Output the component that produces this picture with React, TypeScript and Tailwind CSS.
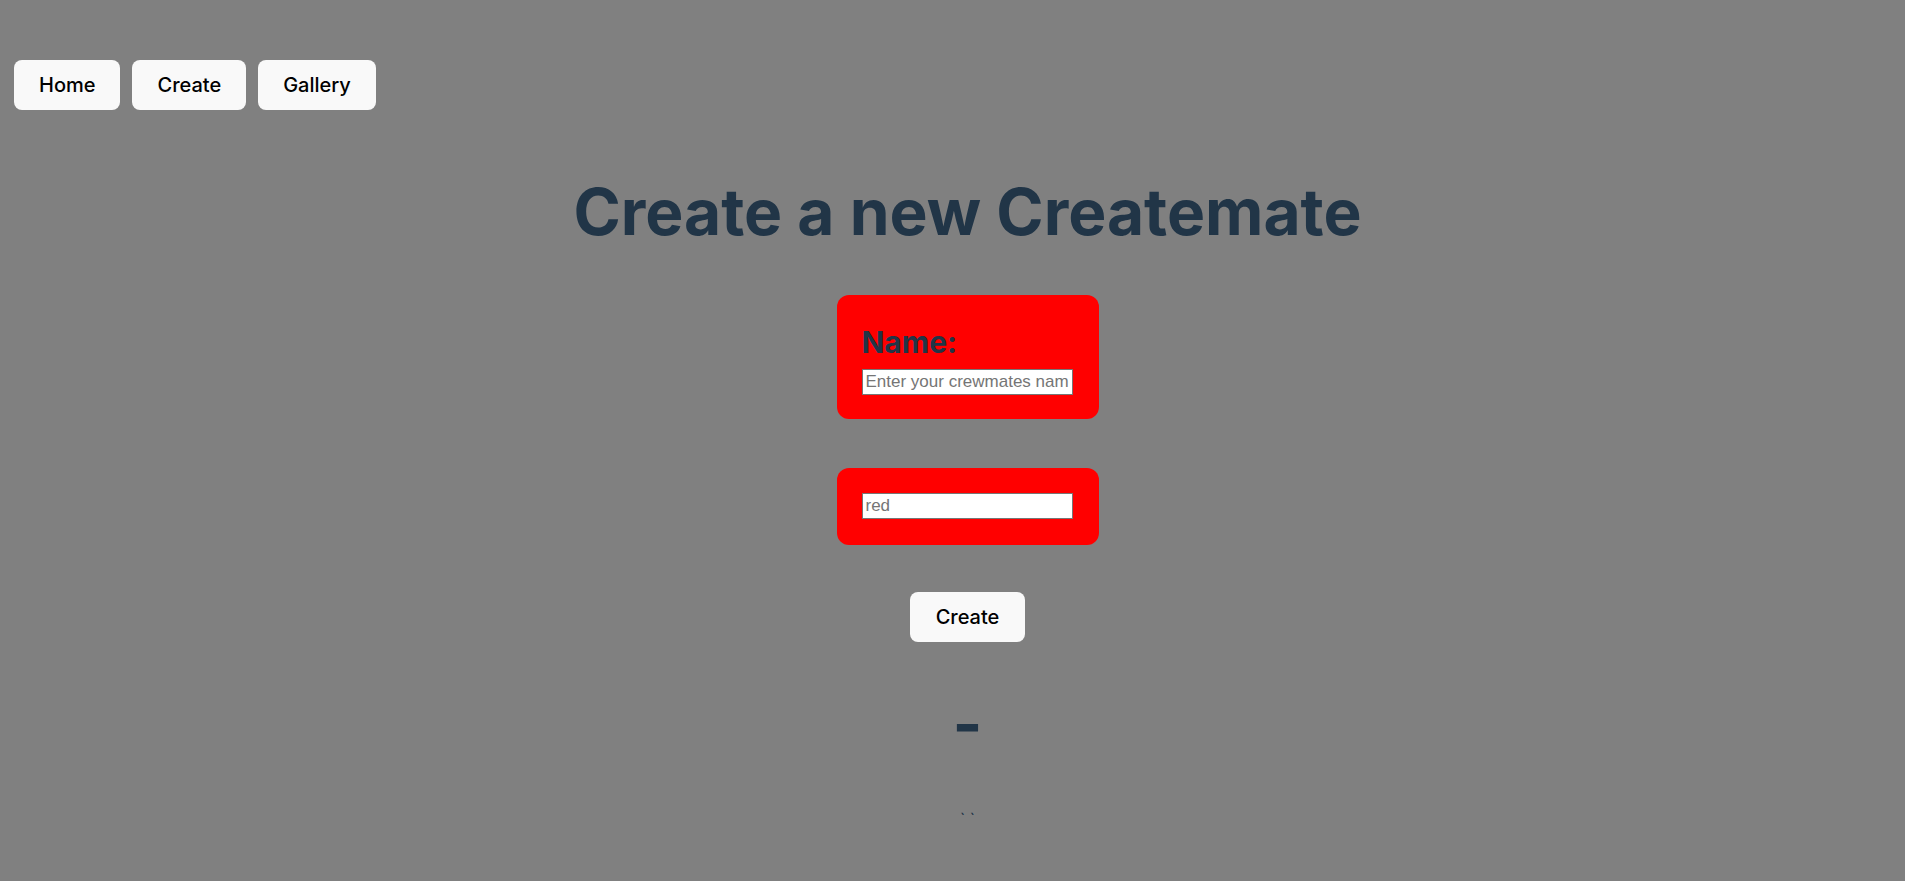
import { useState } from 'react';

const navItems = ['Home', 'Create', 'Gallery'];

export default function App() {
  const [name, setName] = useState('');
  const [color, setColor] = useState('');

  return (
    <div className="w-[1935px] min-h-[899px] bg-[#808080] text-[#213547] font-['Inter',sans-serif] pb-[67px]">
      {/* top nav */}
      <nav className="flex gap-3 pt-[60px] pl-[14px]">
        {navItems.map((item) => (
          <button
            key={item}
            className="h-[50px] px-6 border border-transparent rounded-lg bg-[#f9f9f9] text-black text-[20px] leading-[1.2] font-medium"
          >
            {item}
          </button>
        ))}
      </nav>

      <div className="flex flex-col items-center">
        <h1 className="mt-[67px] text-[64px] leading-[70px] font-bold">Create a new Createmate</h1>

        <form className="flex flex-col items-center" onSubmit={(e) => e.preventDefault()}>
          <div className="mt-[48px] w-[262px] pt-[25px] pb-[24px] px-[25px] rounded-xl bg-[#ff0000]">
            <label className="block text-[30px] leading-[44px] font-bold mb-[5px]">Name:</label>
            <input
              type="text"
              value={name}
              onChange={(e) => setName(e.target.value)}
              placeholder="Enter your crewmates name"
              className="block w-[211px] h-[26px] px-[3px] bg-white border border-[#767676] text-[17px] text-black placeholder:text-[#757575] font-['Liberation_Sans',Arial,sans-serif] outline-none"
            />
          </div>

          <div className="mt-[49px] w-[262px] pt-[25px] pb-[26px] px-[25px] rounded-xl bg-[#ff0000]">
            <input
              type="text"
              value={color}
              onChange={(e) => setColor(e.target.value)}
              placeholder="red"
              className="block w-[211px] h-[26px] px-[3px] bg-white border border-[#767676] text-[17px] text-black placeholder:text-[#757575] font-['Liberation_Sans',Arial,sans-serif] outline-none"
            />
          </div>

          <button
            type="submit"
            className="mt-[47px] h-[50px] w-[115px] border border-transparent rounded-lg bg-[#f9f9f9] text-black text-[20px] leading-[1.2] font-medium"
          >
            Create
          </button>
        </form>

        <h1 className="mt-[47px] text-[64px] leading-[70px] font-bold">-</h1>
        <p className="mt-[48px] text-[16px] leading-6">` `</p>
      </div>
    </div>
  );
}
